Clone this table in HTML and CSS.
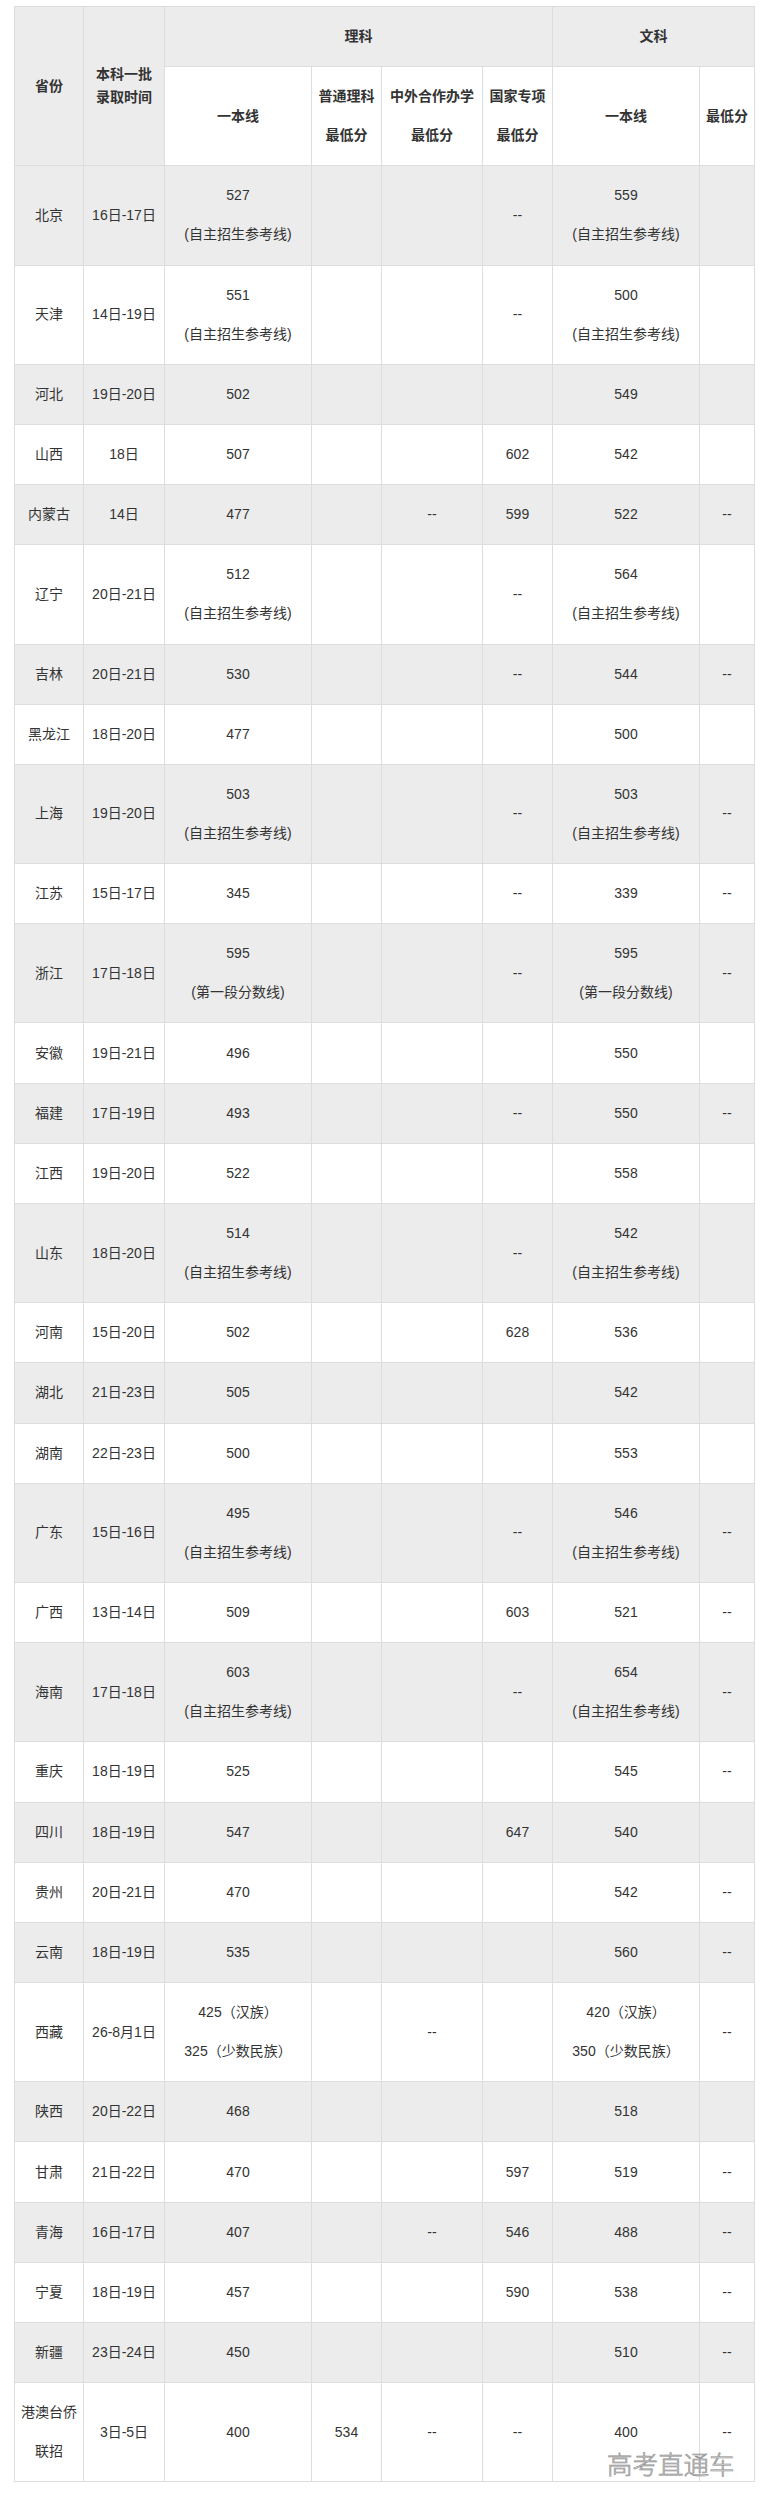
FILE: index.html
```html
<!DOCTYPE html>
<html lang="zh-CN">
<head>
<meta charset="utf-8">
<title>2017年各省一本线</title>
<link rel="stylesheet" href="styles.css">
</head>
<body>
<div class="page">
<table class="score-table">
<colgroup>
<col class="c-prov"><col class="c-date"><col class="c-line"><col class="c-min"><col class="c-coop"><col class="c-spec"><col class="c-line"><col class="c-wmin">
</colgroup>
<thead>
<tr class="gray">
<th rowspan="2"><p>省份</p></th>
<th rowspan="2"><p>本科一批<br>录取时间</p></th>
<th colspan="4"><p>理科</p></th>
<th colspan="2"><p>文科</p></th>
</tr>
<tr class="white">
<th><p>一本线</p></th>
<th><p>普通理科</p><p>最低分</p></th>
<th><p>中外合作办学</p><p>最低分</p></th>
<th><p>国家专项</p><p>最低分</p></th>
<th><p>一本线</p></th>
<th><p>最低分</p></th>
</tr>
</thead>
<tbody>
<tr class="gray"><td><p>北京</p></td><td><p>16日-17日</p></td><td><p>527</p><p>(自主招生参考线)</p></td><td></td><td></td><td><p>--</p></td><td><p>559</p><p>(自主招生参考线)</p></td><td></td></tr>
<tr class="white"><td><p>天津</p></td><td><p>14日-19日</p></td><td><p>551</p><p>(自主招生参考线)</p></td><td></td><td></td><td><p>--</p></td><td><p>500</p><p>(自主招生参考线)</p></td><td></td></tr>
<tr class="gray"><td><p>河北</p></td><td><p>19日-20日</p></td><td><p>502</p></td><td></td><td></td><td></td><td><p>549</p></td><td></td></tr>
<tr class="white"><td><p>山西</p></td><td><p>18日</p></td><td><p>507</p></td><td></td><td></td><td><p>602</p></td><td><p>542</p></td><td></td></tr>
<tr class="gray"><td><p>内蒙古</p></td><td><p>14日</p></td><td><p>477</p></td><td></td><td><p>--</p></td><td><p>599</p></td><td><p>522</p></td><td><p>--</p></td></tr>
<tr class="white"><td><p>辽宁</p></td><td><p>20日-21日</p></td><td><p>512</p><p>(自主招生参考线)</p></td><td></td><td></td><td><p>--</p></td><td><p>564</p><p>(自主招生参考线)</p></td><td></td></tr>
<tr class="gray"><td><p>吉林</p></td><td><p>20日-21日</p></td><td><p>530</p></td><td></td><td></td><td><p>--</p></td><td><p>544</p></td><td><p>--</p></td></tr>
<tr class="white"><td><p>黑龙江</p></td><td><p>18日-20日</p></td><td><p>477</p></td><td></td><td></td><td></td><td><p>500</p></td><td></td></tr>
<tr class="gray"><td><p>上海</p></td><td><p>19日-20日</p></td><td><p>503</p><p>(自主招生参考线)</p></td><td></td><td></td><td><p>--</p></td><td><p>503</p><p>(自主招生参考线)</p></td><td><p>--</p></td></tr>
<tr class="white"><td><p>江苏</p></td><td><p>15日-17日</p></td><td><p>345</p></td><td></td><td></td><td><p>--</p></td><td><p>339</p></td><td><p>--</p></td></tr>
<tr class="gray"><td><p>浙江</p></td><td><p>17日-18日</p></td><td><p>595</p><p>(第一段分数线)</p></td><td></td><td></td><td><p>--</p></td><td><p>595</p><p>(第一段分数线)</p></td><td><p>--</p></td></tr>
<tr class="white"><td><p>安徽</p></td><td><p>19日-21日</p></td><td><p>496</p></td><td></td><td></td><td></td><td><p>550</p></td><td></td></tr>
<tr class="gray"><td><p>福建</p></td><td><p>17日-19日</p></td><td><p>493</p></td><td></td><td></td><td><p>--</p></td><td><p>550</p></td><td><p>--</p></td></tr>
<tr class="white"><td><p>江西</p></td><td><p>19日-20日</p></td><td><p>522</p></td><td></td><td></td><td></td><td><p>558</p></td><td></td></tr>
<tr class="gray"><td><p>山东</p></td><td><p>18日-20日</p></td><td><p>514</p><p>(自主招生参考线)</p></td><td></td><td></td><td><p>--</p></td><td><p>542</p><p>(自主招生参考线)</p></td><td></td></tr>
<tr class="white"><td><p>河南</p></td><td><p>15日-20日</p></td><td><p>502</p></td><td></td><td></td><td><p>628</p></td><td><p>536</p></td><td></td></tr>
<tr class="gray"><td><p>湖北</p></td><td><p>21日-23日</p></td><td><p>505</p></td><td></td><td></td><td></td><td><p>542</p></td><td></td></tr>
<tr class="white"><td><p>湖南</p></td><td><p>22日-23日</p></td><td><p>500</p></td><td></td><td></td><td></td><td><p>553</p></td><td></td></tr>
<tr class="gray"><td><p>广东</p></td><td><p>15日-16日</p></td><td><p>495</p><p>(自主招生参考线)</p></td><td></td><td></td><td><p>--</p></td><td><p>546</p><p>(自主招生参考线)</p></td><td><p>--</p></td></tr>
<tr class="white"><td><p>广西</p></td><td><p>13日-14日</p></td><td><p>509</p></td><td></td><td></td><td><p>603</p></td><td><p>521</p></td><td><p>--</p></td></tr>
<tr class="gray"><td><p>海南</p></td><td><p>17日-18日</p></td><td><p>603</p><p>(自主招生参考线)</p></td><td></td><td></td><td><p>--</p></td><td><p>654</p><p>(自主招生参考线)</p></td><td><p>--</p></td></tr>
<tr class="white"><td><p>重庆</p></td><td><p>18日-19日</p></td><td><p>525</p></td><td></td><td></td><td></td><td><p>545</p></td><td><p>--</p></td></tr>
<tr class="gray"><td><p>四川</p></td><td><p>18日-19日</p></td><td><p>547</p></td><td></td><td></td><td><p>647</p></td><td><p>540</p></td><td></td></tr>
<tr class="white"><td><p>贵州</p></td><td><p>20日-21日</p></td><td><p>470</p></td><td></td><td></td><td></td><td><p>542</p></td><td><p>--</p></td></tr>
<tr class="gray"><td><p>云南</p></td><td><p>18日-19日</p></td><td><p>535</p></td><td></td><td></td><td></td><td><p>560</p></td><td><p>--</p></td></tr>
<tr class="white"><td><p>西藏</p></td><td><p>26-8月1日</p></td><td><p>425（汉族）</p><p>325（少数民族）</p></td><td></td><td><p>--</p></td><td></td><td><p>420（汉族）</p><p>350（少数民族）</p></td><td><p>--</p></td></tr>
<tr class="gray"><td><p>陕西</p></td><td><p>20日-22日</p></td><td><p>468</p></td><td></td><td></td><td></td><td><p>518</p></td><td></td></tr>
<tr class="white"><td><p>甘肃</p></td><td><p>21日-22日</p></td><td><p>470</p></td><td></td><td></td><td><p>597</p></td><td><p>519</p></td><td><p>--</p></td></tr>
<tr class="gray"><td><p>青海</p></td><td><p>16日-17日</p></td><td><p>407</p></td><td></td><td><p>--</p></td><td><p>546</p></td><td><p>488</p></td><td><p>--</p></td></tr>
<tr class="white"><td><p>宁夏</p></td><td><p>18日-19日</p></td><td><p>457</p></td><td></td><td></td><td><p>590</p></td><td><p>538</p></td><td><p>--</p></td></tr>
<tr class="gray"><td><p>新疆</p></td><td><p>23日-24日</p></td><td><p>450</p></td><td></td><td></td><td></td><td><p>510</p></td><td><p>--</p></td></tr>
<tr class="white"><td><p>港澳台侨</p><p>联招</p></td><td><p>3日-5日</p></td><td><p>400</p></td><td><p>534</p></td><td><p>--</p></td><td><p>--</p></td><td><p>400</p></td><td><p>--</p></td></tr>
</tbody>
</table>
<div class="watermark">高考直通车</div>
</div>
</body>
</html>
```

FILE: styles.css
```css
html, body {
  margin: 0;
  padding: 0;
  background: #ffffff;
}

.page {
  position: relative;
  padding: 6px 0 0 14px;
  font-family: "Liberation Sans", "Noto Sans CJK SC", sans-serif;
  font-size: 14px;
  color: #333333;
}

.score-table {
  table-layout: fixed;
  border-collapse: collapse;
  width: 740px;
}

.c-prov { width: 69px; }
.c-date { width: 81px; }
.c-line { width: 147px; }
.c-min { width: 70px; }
.c-coop { width: 101px; }
.c-spec { width: 70px; }
.c-wmin { width: 55px; }

.score-table th,
.score-table td {
  border: 1px solid #dddddd;
  padding: 2.1px 0;
  text-align: center;
  vertical-align: middle;
  font-weight: normal;
}

.score-table th {
  font-weight: bold;
}

.score-table p {
  margin: 16px 0;
  line-height: 23px;
  white-space: nowrap;
}

.gray {
  background: #ececec;
}

.white {
  background: #ffffff;
}

.watermark {
  position: absolute;
  left: 607px;
  top: 2448px;
  font-family: "Noto Sans CJK SC", sans-serif;
  font-weight: 300;
  font-size: 25.5px;
  line-height: 30px;
  color: #d8d8d8;
  -webkit-text-stroke: 0.6px #888888;
  letter-spacing: 0;
}
```
